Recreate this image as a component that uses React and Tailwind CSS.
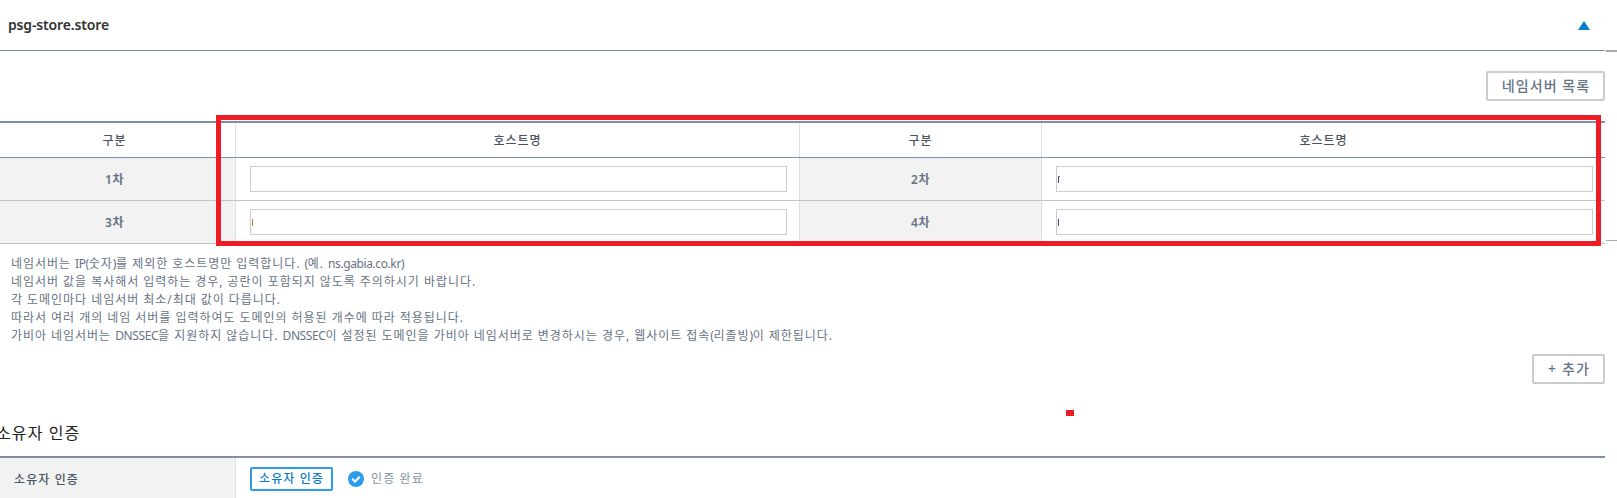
const fontStack = "font-['Noto_Sans','Noto_Sans_CJK_KR',sans-serif]";

const notes = [
  '네임서버는 IP(숫자)를 제외한 호스트명만 입력합니다. (예. ns.gabia.co.kr)',
  '네임서버 값을 복사해서 입력하는 경우, 공란이 포함되지 않도록 주의하시기 바랍니다.',
  '각 도메인마다 네임서버 최소/최대 값이 다릅니다.',
  '따라서 여러 개의 네임 서버를 입력하여도 도메인의 허용된 개수에 따라 적용됩니다.',
  '가비아 네임서버는 DNSSEC을 지원하지 않습니다. DNSSEC이 설정된 도메인을 가비아 네임서버로 변경하시는 경우, 웹사이트 접속(리졸빙)이 제한됩니다.',
];

// Latin runs and parentheses are set tighter than the Hangul around them.
function Note({ text }) {
  return (
    <p>
      {text.split(/([A-Za-z.()]*[A-Za-z()]+)/).map((part, i) =>
        i % 2 ? (
          <span key={i} className="tracking-[-0.4px]">{part}</span>
        ) : (
          part
        ),
      )}
    </p>
  );
}

function HostInput({ mark }) {
  return (
    <div className="flex h-[26px] w-full items-center border border-[#ccc] bg-white pl-px">
      {mark === 'orange' && <span className="h-[7px] w-px bg-[#c77a2a]" />}
      {mark === 'navy' && <span className="h-[7px] w-px bg-[#4a4580]" />}
      {mark === 'hook' && (
        <span className="h-[7px] w-[2px] border-t border-l border-t-[#6a7aa0] border-l-[#4a4580]" />
      )}
    </div>
  );
}

function NumberCell({ children, right }) {
  return (
    <div className={`flex items-center justify-center border-r border-[#e0e0e0] bg-[#f2f2f2] pt-0.5 text-[12px] font-semibold tracking-[0.6px] text-[#677384] ${right ? 'pr-0' : 'pr-[6px]'}`}>
      {children}
    </div>
  );
}

function HeadCell({ children, className = '' }) {
  return (
    <div className={`flex items-center justify-center pt-0.5 text-[12px] font-medium tracking-[0.95px] text-[#4b535e] ${className}`}>
      {children}
    </div>
  );
}

const columns = 'grid grid-cols-[236px_564px_242px_563px]';

function HostRow({ left, right, leftMark, rightMark }) {
  return (
    <div className={`${columns} h-[43px] border-b border-[#c4c4c4]`}>
      <NumberCell>{left}</NumberCell>
      <div className="flex items-center border-r border-[#e0e0e0] pr-3 pl-[14px]">
        <HostInput mark={leftMark} />
      </div>
      <NumberCell right>{right}</NumberCell>
      <div className="flex items-center pr-3 pl-[14px]">
        <HostInput mark={rightMark} />
      </div>
    </div>
  );
}

function GrayButton({ children, className = '' }) {
  return (
    <button className={`flex h-[30px] items-center justify-center rounded-[2px] border-2 border-[#ccc] bg-white pb-px pl-px text-[14px] leading-none font-medium tracking-[1.1px] whitespace-pre text-[#677384] ${className}`}>
      {children}
    </button>
  );
}

export default function App() {
  return (
    <div className={`relative flex h-[498px] w-[1617px] overflow-hidden bg-white ${fontStack}`}>
      <main className="flex w-[1605px] shrink-0 flex-col">
        <header className="flex h-[51px] shrink-0 items-center justify-between border-b border-[#7d90a4] pr-[15px] pl-2">
          <h1 className="pb-0.5 text-[14px] font-semibold tracking-[-0.15px] text-[#333]">psg-store.store</h1>
          <svg className="h-[9px] w-3" viewBox="0 0 12 9">
            <path d="M6 0L12 9H0Z" fill="#0a7bcb" />
          </svg>
        </header>

        <div className="flex h-[70px] shrink-0 items-start justify-end pt-5">
          <GrayButton className="w-[119px]">네임서버 목록</GrayButton>
        </div>

        <section className="shrink-0">
          <div className={`${columns} h-[37px] border-t-2 border-b border-[#7d90a4]`}>
            <HeadCell className="border-r border-[#e0e0e0] pr-[6px]">구분</HeadCell>
            <HeadCell className="border-r border-[#e0e0e0]">호스트명</HeadCell>
            <HeadCell className="border-r border-[#e0e0e0]">구분</HeadCell>
            <HeadCell>호스트명</HeadCell>
          </div>
          <HostRow left="1차" right="2차" rightMark="hook" />
          <HostRow left="3차" right="4차" leftMark="orange" rightMark="navy" />
        </section>

        <div className="h-[110px] shrink-0 pt-[11px] pl-[11px] text-[12px] leading-[18px] tracking-[0.96px] whitespace-nowrap text-[#677384]">
          {notes.map((text) => (
            <Note key={text} text={text} />
          ))}
        </div>

        <div className="flex h-[30px] shrink-0 justify-end">
          <GrayButton className="w-[73px]">+ 추가</GrayButton>
        </div>

        <h2 className="-ml-1 flex h-[72px] shrink-0 items-end pb-[11px] text-[16px] leading-[24px] tracking-[1.1px] text-[#222]">소유자 인증</h2>

        <section className="flex h-[42px] shrink-0 border-t-2 border-[#7d90a4]">
          <div className="flex w-[236px] items-center border-r border-[#e0e0e0] bg-[#f2f2f2] pt-[3px] pl-[14px] text-[12px] font-medium tracking-[1.1px] text-[#4b535e]">
            소유자 인증
          </div>
          <div className="flex items-start pt-[9px] pl-[14px]">
            <button className="flex h-6 w-[83px] items-center justify-center rounded-[2px] border-2 border-[#2d9cec] text-[12px] leading-none font-medium tracking-[1.1px] text-[#0a7bcb]">
              소유자 인증
            </button>
            <svg className="mt-1 ml-[15px] size-4" viewBox="0 0 16 16">
              <circle cx="8" cy="8" r="8" fill="#2d9cec" />
              <path d="M4.2 7.8L7 10.6L11.8 5.8" fill="none" stroke="#fff" strokeWidth="2.1" />
            </svg>
            <span className="ml-[7px] text-[12px] leading-6 tracking-[1.1px] text-[#8392a2]">인증 완료</span>
          </div>
        </section>
      </main>

      <aside className="flex w-3 shrink-0 flex-col pt-[50px] pl-px">
        <div className="h-[191px] border-t-2 border-b border-[#aaa]" />
      </aside>

      <div className="absolute top-[115px] left-[216px] h-[131px] w-[1385px] border-[5px] border-[#ee1c24]" />
      <div className="absolute top-[410px] left-[1066px] h-[6px] w-2 bg-[#ee1c24]" />
    </div>
  );
}
